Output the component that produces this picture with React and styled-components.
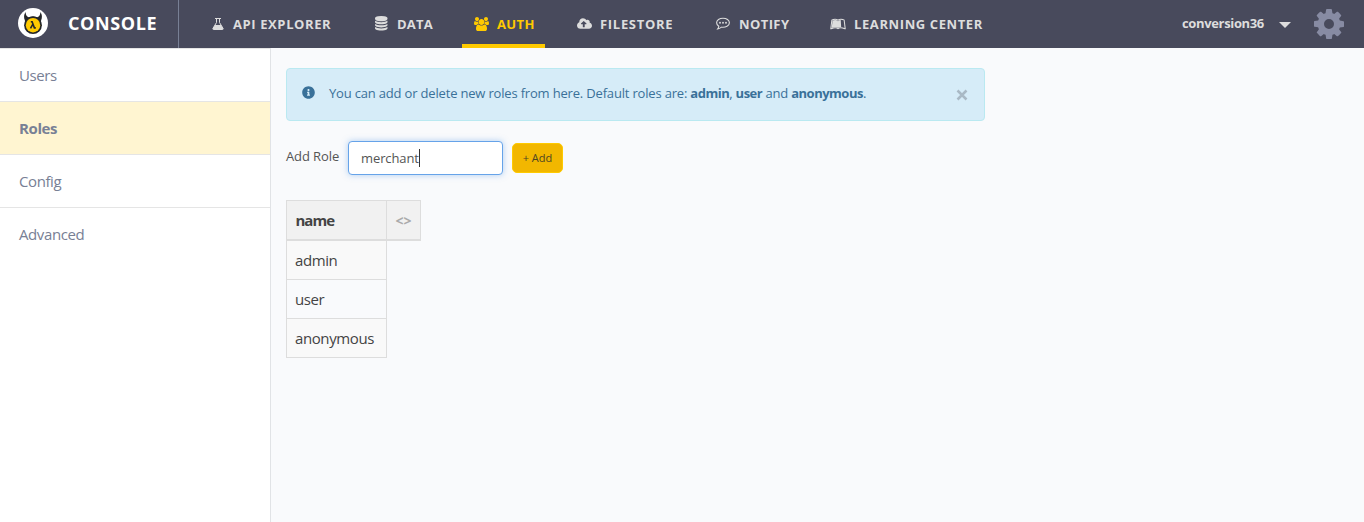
import React from "react";
import styled, { createGlobalStyle } from "styled-components";
import { FaCloudUploadAlt, FaLeanpub, FaInfoCircle } from "react-icons/fa";

const GlobalStyle = createGlobalStyle`
  *, *::before, *::after { box-sizing: border-box; }
  body {
    margin: 0;
    background: #f9fafc;
    font-family: "Open Sans", "Noto Sans", sans-serif;
    overflow: hidden;
  }
`;

const Page = styled.div`
  height: 522px;
  display: flex;
  flex-direction: column;
`;

const Header = styled.header`
  height: 48px;
  flex: none;
  display: flex;
  background: #484a5c;
  color: #ddd;
`;

const Brand = styled.div`
  width: 179px;
  display: flex;
  align-items: center;
  padding: 0 0 2px 18px;
  gap: 20px;
  border-right: 1px solid #788095;
  color: #fff;
  white-space: nowrap;
`;

const BrandName = styled.span`
  font-size: 18px;
  font-weight: 700;
  letter-spacing: 0.6px;
`;

const Nav = styled.nav`
  display: flex;
  padding-left: 21px;
`;

const NavItem = styled.a`
  width: ${(p) => p.$width}px;
  margin-right: ${(p) => p.$gap}px;
  display: flex;
  align-items: center;
  padding: 3px 0 0 12px;
  border-bottom: 4px solid ${(p) => (p.$active ? "#ffca00" : "transparent")};
  color: ${(p) => (p.$active ? "#ffca00" : "#ddd")};
  font-size: 13px;
  font-weight: 700;
  letter-spacing: ${(p) => p.$spacing}px;
  white-space: nowrap;
`;

const NavIcon = styled.span`
  display: flex;
  flex: none;
  width: ${(p) => p.$width}px;
`;

const Account = styled.div`
  margin-left: auto;
  display: flex;
  align-items: center;
  padding-right: 20px;
`;

const ProjectName = styled.span`
  width: 97px;
  padding-bottom: 2px;
  font-size: 13px;
  font-weight: 700;
  letter-spacing: -0.35px;
`;

const Caret = styled.span`
  border: 6px solid transparent;
  border-top-color: #ddd;
  border-bottom: 0;
  margin: 2px 23px 0 0;
`;

const Body = styled.div`
  flex: 1;
  display: flex;
`;

const Sidebar = styled.aside`
  width: 271px;
  background: #fff;
  border-right: 1px solid #e1e3e6;
  border-top: 1px solid #e5e5e5;
`;

const SideLink = styled.a`
  display: flex;
  align-items: center;
  height: 53px;
  padding-left: 19px;
  font-size: 15px;
  letter-spacing: -0.4px;
  color: #788095;
  font-weight: ${(p) => (p.$active ? 700 : 400)};
  background: ${(p) => (p.$active ? "#fff5d1" : "#fff")};
  border-bottom: 1px solid #e5e5e5;
  &:last-child { border-bottom: 0; height: 52px; }
`;

const Main = styled.main`
  padding: 20px 15px;
`;

const Alert = styled.div`
  width: 699px;
  height: 53px;
  display: flex;
  align-items: center;
  padding: 0 16px 4px 15px;
  background: #d6ecf8;
  border: 1px solid #bae9f1;
  border-radius: 4px;
  color: #3a7199;
  font-size: 13px;
`;

const AlertText = styled.span`
  margin-left: 14px;
  white-space: nowrap;
  letter-spacing: -0.18px;
  b { letter-spacing: -0.5px; }
`;

const CloseIcon = styled.svg`
  margin: 4px 0 0 auto;
`;

const RoleForm = styled.form`
  display: flex;
  align-items: center;
  margin-top: 20px;
  font-size: 13px;
  letter-spacing: -0.1px;
  color: #555;
`;

const Label = styled.label`
  width: 62px;
  padding-bottom: 4px;
  white-space: nowrap;
`;

const Field = styled.div`
  width: 155px;
  height: 34px;
  display: flex;
  align-items: center;
  padding-left: 12px;
  background: #fff;
  border: 1px solid #66a3e9;
  border-radius: 4px;
  box-shadow: 0 0 6px rgba(102, 163, 233, 0.5);
`;

const TextCursor = styled.i`
  width: 1px;
  height: 18px;
  background: #333;
`;

const AddButton = styled.button`
  width: 51px;
  height: 30px;
  margin-left: 9px;
  padding: 0 0 2px;
  border: 1px solid #ffca00;
  border-radius: 5px;
  background: #f2b700;
  color: #4d4524;
  font: 11px "Open Sans", sans-serif;
`;

const Table = styled.table`
  margin-top: 25px;
  border-collapse: separate;
  border-spacing: 0;
  table-layout: fixed;
  font-size: 15px;
  color: #444;
`;

const Th = styled.th`
  width: ${(p) => p.$width}px;
  height: 41px;
  padding: 0 8.5px;
  text-align: left;
  letter-spacing: -1px;
  background: #f1f1f1;
  border: 1px solid #ddd;
  border-bottom-width: 2px;
  & + & {
    border-left: 0;
    color: #aaa;
    font-size: 14px;
    letter-spacing: 0;
  }
`;

const Td = styled.td`
  height: 39px;
  padding: 0 8px;
  border: 1px solid #ddd;
  border-top: 0;
  letter-spacing: -0.4px;
  tr:nth-child(odd) > & { background: #f9f9f9; }
`;

const Mascot = () => (
  <svg width="30" height="30" viewBox="0 0 30 30">
    <circle cx="15" cy="15" r="15" fill="#fff" />
    <path d="M7.6 4C5.8 6.4 5.6 9.6 6.9 12.4L8 18L22 18L23.1 12.4C24.4 9.6 24.2 6.4 22.4 4C22.3 6.8 21.3 8.6 19.4 9.3C16.7 8.2 13.3 8.2 10.6 9.3C8.7 8.6 7.7 6.8 7.6 4Z" fill="#242629" />
    <circle cx="15" cy="17.2" r="8.9" fill="#242629" />
    <circle cx="15" cy="17.2" r="7.2" fill="#ffca00" />
    <path d="M12.8 13.7h1.3l2.3 6.2h1.4M14.9 16.2l-2.4 4.2" fill="none" stroke="#242629" strokeWidth="1.6" />
  </svg>
);

const FlaskIcon = () => (
  <svg width="12" height="12" viewBox="0 0 12 12">
    <path d="M3 .5h6M4.5 .5v4L1 10.3Q.5 11.5 1.6 11.5h8.8Q11.5 11.5 11 10.3L7.5 4.5v-4" fill="none" stroke="currentColor" />
    <path d="M3 7h6l2.3 3.8-.8.7h-9l-.8-.7z" fill="currentColor" />
  </svg>
);

const SpeechIcon = () => (
  <svg width="14" height="13" viewBox="0 0 14 13">
    <path d="M7 1.2C3.5 1.2.6 3.200.6 5.800c0 1.400.9 2.600 2.200 3.500-.1 1-.6 1.900-1.200 2.700 1.600-.2 2.900-1 3.800-1.800C9.800 10.800 13.400 8.800 13.400 5.800 13.400 3.200 10.500 1.200 7 1.200z" fill="none" stroke="currentColor" strokeWidth="1.1" />
    <g fill="currentColor">
      <circle cx="4" cy="5.800" r=".95" />
      <circle cx="7" cy="5.800" r=".95" />
      <circle cx="10" cy="5.800" r=".95" />
    </g>
  </svg>
);

const DiscsIcon = () => (
  <svg width="12.5" height="14.5" viewBox="0 0 1536 1792" fill="currentColor">
    <path d="M768 768q237 0 443-43t325-127v170q0 69-103 128t-280 93.5-385 34.5-385-34.5-280-93.5-103-128v-170q119 84 325 127t443 43zm0 768q237 0 443-43t325-127v170q0 69-103 128t-280 93.5-385 34.5-385-34.5-280-93.5-103-128v-170q119 84 325 127t443 43zm0-384q237 0 443-43t325-127v170q0 69-103 128t-280 93.5-385 34.5-385-34.5-280-93.5-103-128v-170q119 84 325 127t443 43zm0-1152q208 0 385 34.5t280 93.5 103 128v128q0 69-103 128t-280 93.5-385 34.5-385-34.5-280-93.5-103-128v-128q0-69 103-128t280-93.5 385-34.5z" />
  </svg>
);

const GroupIcon = () => (
  <svg width="15" height="14" viewBox="0 0 1920 1792" fill="currentColor">
    <path d="M593 896q-162 5-265 128h-134q-82 0-138-40.5t-56-118.5q0-353 124-353 6 0 43.5 21t97.5 42.5 119 21.5q67 0 133-23-5 37-5 66 0 139 81 256zm1071 637q0 120-73 189.5t-194 69.5h-874q-121 0-194-69.5t-73-189.5q0-53 3.5-103.5t14-109 26.5-108.5 43-97.5 62-81 85.5-53.5 111.5-20q10 0 43 21.5t73 48 107 48 135 21.5 135-21.5 107-48 73-48 43-21.5q61 0 111.5 20t85.5 53.5 62 81 43 97.5 26.5 108.5 14 109 3.5 103.5zm-1024-1277q0 106-75 181t-181 75-181-75-75-181 75-181 181-75 181 75 75 181zm704 384q0 159-112.5 271.5t-271.5 112.5-271.5-112.5-112.5-271.5 112.5-271.5 271.5-112.5 271.5 112.5 112.5 271.5zm576 225q0 78-56 118.5t-138 40.5h-134q-103-123-265-128 81-117 81-256 0-29-5-66 66 23 133 23 59 0 119-21.5t97.5-42.5 43.5-21q124 0 124 353zm-128-609q0 106-75 181t-181 75-181-75-75-181 75-181 181-75 181 75 75 181z" />
  </svg>
);

const GearIcon = () => (
  <svg width="30" height="30" viewBox="128 128 1536 1536" fill="#878ba3">
    <path d="M1152 896q0-106-75-181t-181-75-181 75-75 181 75 181 181 75 181-75 75-181zm512-109v222q0 12-8 23t-20 13l-185 28q-19 54-39 91 35 50 107 138 10 12 10 25t-9 23q-27 37-99 108t-94 71q-12 0-26-9l-138-108q-44 23-91 38-16 136-29 186-7 28-36 28h-222q-14 0-24.5-8.5t-11.5-21.5l-28-184q-49-16-90-37l-141 107q-10 9-25 9-14 0-25-11-126-114-165-168-7-10-7-23 0-12 8-23 15-21 51-66.5t54-70.5q-27-50-41-99l-183-27q-13-2-21-12.5t-8-23.5v-222q0-12 8-23t19-13l186-28q14-46 39-92-40-57-107-138-10-12-10-24 0-10 9-23 26-36 98.5-107.5t94.5-71.5q13 0 26 10l138 107q44-23 91-38 16-136 29-186 7-28 36-28h222q14 0 24.5 8.5t11.5 21.5l28 184q49 16 90 37l142-107q9-9 24-9 13 0 25 10 129 119 165 170 7 8 7 22 0 12-8 23-15 21-51 66.5t-54 70.5q26 50 41 98l183 28q13 2 21 12.5t8 23.5z" />
  </svg>
);

const navItems = [
  { label: "API EXPLORER", icon: <FlaskIcon />, width: 142, gap: 21, iconWidth: 21, spacing: 0.6 },
  { label: "DATA", icon: <DiscsIcon />, width: 80, gap: 19, iconWidth: 22, spacing: 0.2 },
  { label: "AUTH", icon: <GroupIcon />, width: 83, gap: 20, iconWidth: 23, spacing: 0.4, active: true },
  { label: "FILESTORE", icon: <FaCloudUploadAlt size={15} />, width: 119, gap: 20, iconWidth: 23, spacing: 0.7 },
  { label: "NOTIFY", icon: <SpeechIcon />, width: 94, gap: 20, iconWidth: 23, spacing: 0.4 },
  { label: "LEARNING CENTER", icon: <FaLeanpub size={16} />, width: 174, gap: 0, iconWidth: 24, spacing: 0.6 },
];

const sideLinks = [
  { label: "Users" },
  { label: "Roles", active: true },
  { label: "Config" },
  { label: "Advanced" },
];

export default function App() {
  return (
    <Page>
      <GlobalStyle />
      <Header>
        <Brand>
          <Mascot />
          <BrandName>CONSOLE</BrandName>
        </Brand>
        <Nav>
          {navItems.map((n) => (
            <NavItem key={n.label} $width={n.width} $gap={n.gap} $active={n.active} $spacing={n.spacing}>
              <NavIcon $width={n.iconWidth}>{n.icon}</NavIcon>
              {n.label}
            </NavItem>
          ))}
        </Nav>
        <Account>
          <ProjectName>conversion36</ProjectName>
          <Caret />
          <GearIcon />
        </Account>
      </Header>
      <Body>
        <Sidebar>
          {sideLinks.map((s) => (
            <SideLink key={s.label} $active={s.active}>{s.label}</SideLink>
          ))}
        </Sidebar>
        <Main>
          <Alert>
            <FaInfoCircle size={13} />
            <AlertText>
              You can add or delete new roles from here. Default roles are: <b>admin</b>, <b>user</b> and <b>anonymous</b>.
            </AlertText>
            <CloseIcon width="12" height="12" viewBox="0 0 12 12" stroke="#a9b9c5" strokeWidth="2.5">
              <path d="M1.5 1.5l9 9M10.5 1.5l-9 9" />
            </CloseIcon>
          </Alert>
          <RoleForm>
            <Label>Add Role</Label>
            <Field>
              merchant
              <TextCursor />
            </Field>
            <AddButton type="button">+ Add</AddButton>
          </RoleForm>
          <Table>
            <thead>
              <tr>
                <Th $width={101}>name</Th>
                <Th $width={34}>&lt;&gt;</Th>
              </tr>
            </thead>
            <tbody>
              {["admin", "user", "anonymous"].map((r) => (
                <tr key={r}>
                  <Td>{r}</Td>
                </tr>
              ))}
            </tbody>
          </Table>
        </Main>
      </Body>
    </Page>
  );
}
